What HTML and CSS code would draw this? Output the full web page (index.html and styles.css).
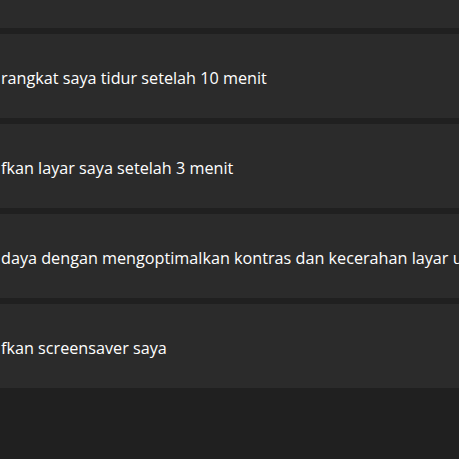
FILE: index.html
```html
<!DOCTYPE html>
<html lang="id">
<head>
<meta charset="utf-8">
<title>Daya</title>
<link rel="stylesheet" href="styles.css">
</head>
<body>
<div class="list">
  <div class="card"><span class="label"></span></div>
  <div class="card"><span class="label">rangkat saya tidur setelah 10 menit</span></div>
  <div class="card"><span class="label">fkan layar saya setelah 3 menit</span></div>
  <div class="card"><span class="label">daya dengan mengoptimalkan kontras dan kecerahan layar untuk</span></div>
  <div class="card"><span class="label">fkan screensaver saya</span></div>
</div>
</body>
</html>
```

FILE: styles.css
```css
html, body {
  margin: 0;
  padding: 0;
  background: #202020;
  overflow: hidden;
}
.list {
  display: flex;
  flex-direction: column;
  gap: 6px;
  margin-top: -56px;
}
.card {
  height: 84px;
  background: #2b2b2b;
  display: flex;
  align-items: center;
  padding-left: 1px;
  overflow: hidden;
}
.label {
  font-family: "Open Sans", "Noto Sans", sans-serif;
  font-size: 16.2px;
  color: #ffffff;
  white-space: nowrap;
  padding-top: 4px;
}
```
